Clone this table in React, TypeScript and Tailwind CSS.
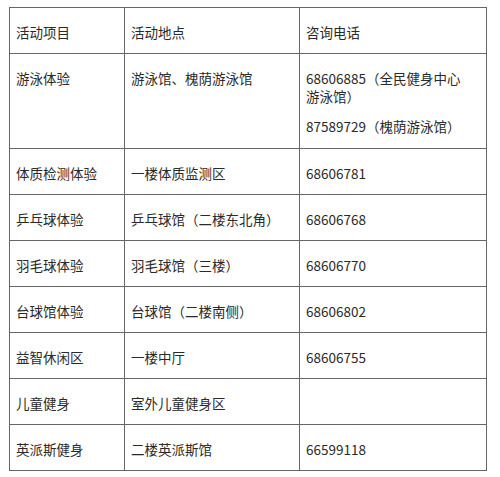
const rows: { name: string; place: string; phone: string[] }[] = [
  { name: "体质检测体验", place: "一楼体质监测区", phone: ["68606781"] },
  { name: "乒乓球体验", place: "乒乓球馆（二楼东北角）", phone: ["68606768"] },
  { name: "羽毛球体验", place: "羽毛球馆（三楼）", phone: ["68606770"] },
  { name: "台球馆体验", place: "台球馆（二楼南侧）", phone: ["68606802"] },
  { name: "益智休闲区", place: "一楼中厅", phone: ["68606755"] },
  { name: "儿童健身", place: "室外儿童健身区", phone: [] },
  { name: "英派斯健身", place: "二楼英派斯馆", phone: ["66599118"] },
];

const cell = "border border-[#666] align-top px-[6px] pt-[15px]";

export default function App() {
  return (
    <div
      className="w-[500px] h-[477px] bg-white pt-[7px] pl-[9px] text-[13.5px] leading-[18px] text-[#2a2a2a]"
      style={{ fontFamily: '"Noto Sans CJK SC", "Noto Sans", sans-serif' }}
    >
      <table className="border-collapse table-fixed w-[477px]">
        <colgroup>
          <col className="w-[115px]" />
          <col className="w-[175px]" />
          <col className="w-[187px]" />
        </colgroup>
        <tbody>
          <tr className="h-[46px]">
            <td className={cell}>活动项目</td>
            <td className={cell}>活动地点</td>
            <td className={cell}>咨询电话</td>
          </tr>
          <tr className="h-[95px]">
            <td className={cell}>游泳体验</td>
            <td className={cell}>游泳馆、槐荫游泳馆</td>
            <td className={cell}>
              <p>
                68606885（全民健身中心
                <br />
                游泳馆）
              </p>
              <p className="mt-[12px]">87589729（槐荫游泳馆）</p>
            </td>
          </tr>
          {rows.map((r) => (
            <tr key={r.name} className="h-[46px]">
              <td className={cell}>{r.name}</td>
              <td className={cell}>{r.place}</td>
              <td className={cell}>{r.phone.join(" ")}</td>
            </tr>
          ))}
        </tbody>
      </table>
    </div>
  );
}
